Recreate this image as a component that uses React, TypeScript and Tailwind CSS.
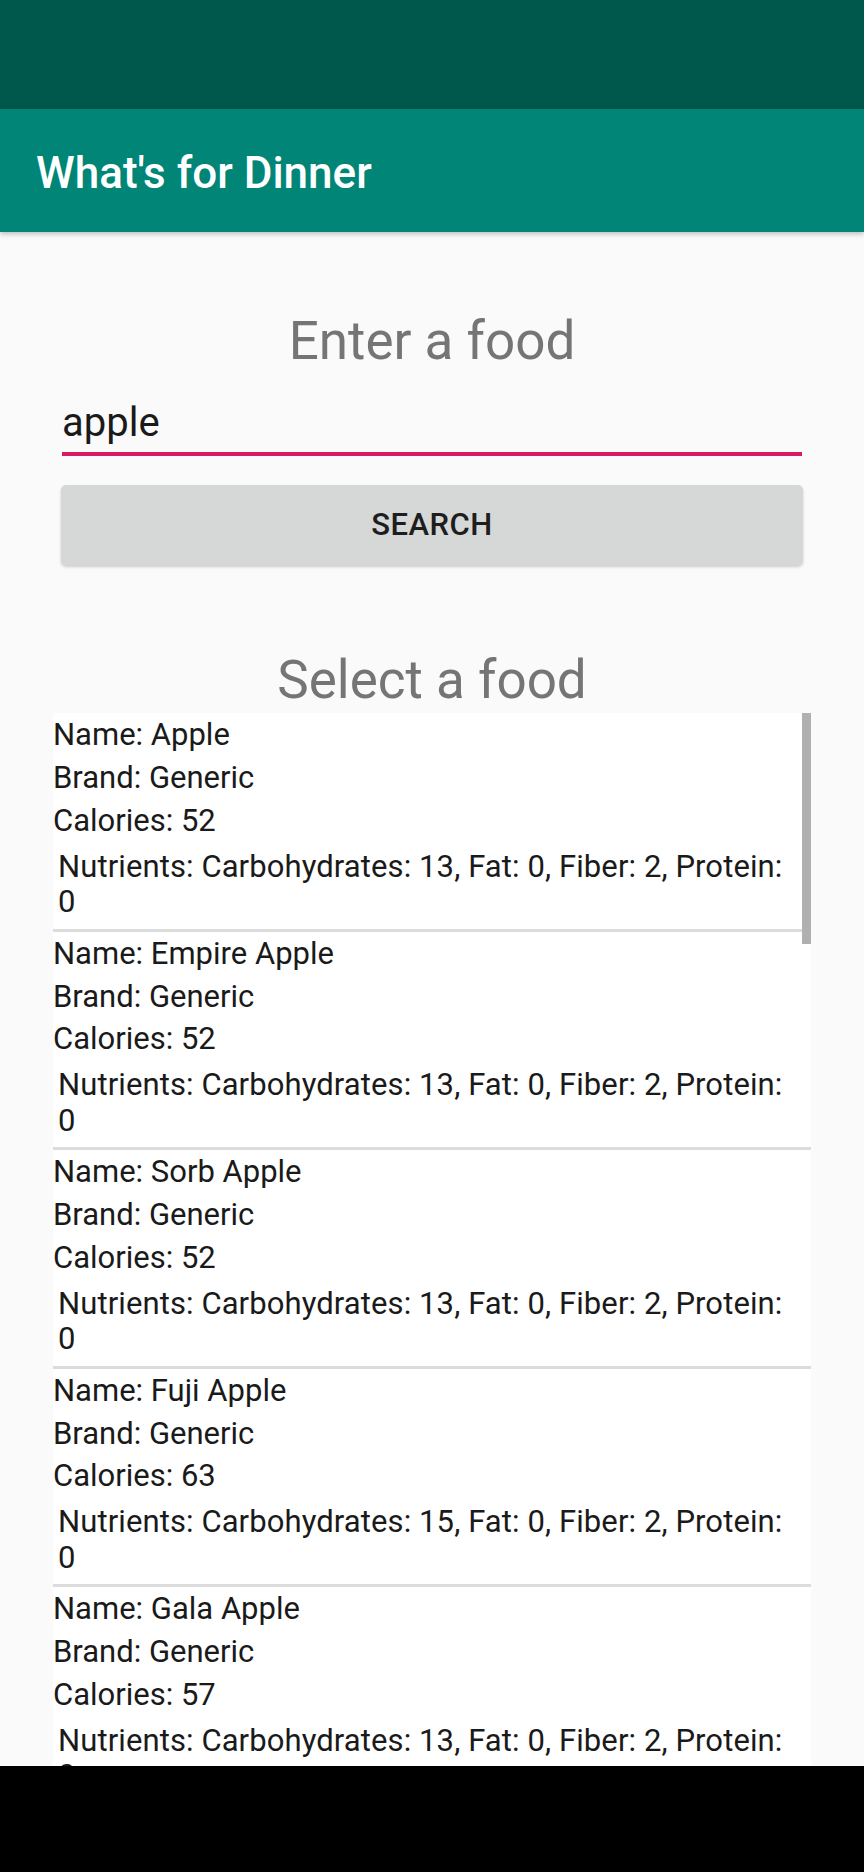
import React from "react";

type Food = { name: string; calories: number; carbs: number };

const foods: Food[] = [
  { name: "Apple", calories: 52, carbs: 13 },
  { name: "Empire Apple", calories: 52, carbs: 13 },
  { name: "Sorb Apple", calories: 52, carbs: 13 },
  { name: "Fuji Apple", calories: 63, carbs: 15 },
  { name: "Gala Apple", calories: 57, carbs: 13 },
];

function Item({ f }: { f: Food }) {
  return (
    <div className="flex shrink-0 flex-col border-b-[3px] border-[#dcdcdc] pt-[4px] pb-[9px] text-[31px] leading-[36px] text-[#1a1a1a]">
      <div className="h-[36px] whitespace-nowrap">Name: {f.name}</div>
      <div className="mt-[7px] h-[36px] whitespace-nowrap">Brand: Generic</div>
      <div className="mt-[6.5px] h-[36px] whitespace-nowrap">Calories: {f.calories}</div>
      <div className="mt-[10px] pl-[5px] leading-[35.5px] tracking-[0.1px]">
        <div className="whitespace-nowrap">
          Nutrients: Carbohydrates: {f.carbs}, Fat: 0, Fiber: 2, Protein:
        </div>
        <div>0</div>
      </div>
    </div>
  );
}

export default function App() {
  return (
    <div
      className="flex h-[1872px] w-[864px] flex-col overflow-hidden bg-[#fafafa]"
      style={{ fontFamily: "Roboto, 'Noto Sans', sans-serif" }}
    >
      <div className="h-[109px] shrink-0 bg-[#00574b]" />
      <div className="relative z-10 h-[123px] shrink-0 bg-[#008577] pl-[36px] pt-[39px] shadow-[0_2px_5px_rgba(0,0,0,0.25)]">
        <div className="text-[44px] font-medium leading-[51px] text-white">What's for Dinner</div>
      </div>
      <div className="flex h-[1534px] shrink-0 flex-col overflow-hidden">
        <div className="mt-[78px] shrink-0 text-center text-[53px] leading-[62px] text-[#757575]">Enter a food</div>
        <div className="mx-[62px] mt-[27px] shrink-0 border-b-[4px] border-[#d81b60] pb-[6px]">
          <div className="h-[47px] text-[40px] leading-[47px] text-[#1a1a1a]">apple</div>
        </div>
        <div className="mx-[61px] mt-[29px] flex h-[80px] shrink-0 items-center justify-center rounded-[5px] bg-[#d6d7d7] shadow-[0_2px_3px_rgba(0,0,0,0.18)]">
          <span className="text-[31px] font-medium tracking-[0.5px] text-[#1e1e1e]">SEARCH</span>
        </div>
        <div className="mt-[84px] shrink-0 text-center text-[53px] leading-[62px] text-[#757575]">Select a food</div>
        <div className="relative mx-[53px] mt-[2px] shrink-0 bg-white">
          {foods.map((f) => (
            <Item key={f.name} f={f} />
          ))}
          <div className="absolute right-0 top-0 h-[231px] w-[9px] bg-[#b0b0b0]" />
        </div>
      </div>
      <div className="h-[106px] shrink-0 bg-black" />
    </div>
  );
}
